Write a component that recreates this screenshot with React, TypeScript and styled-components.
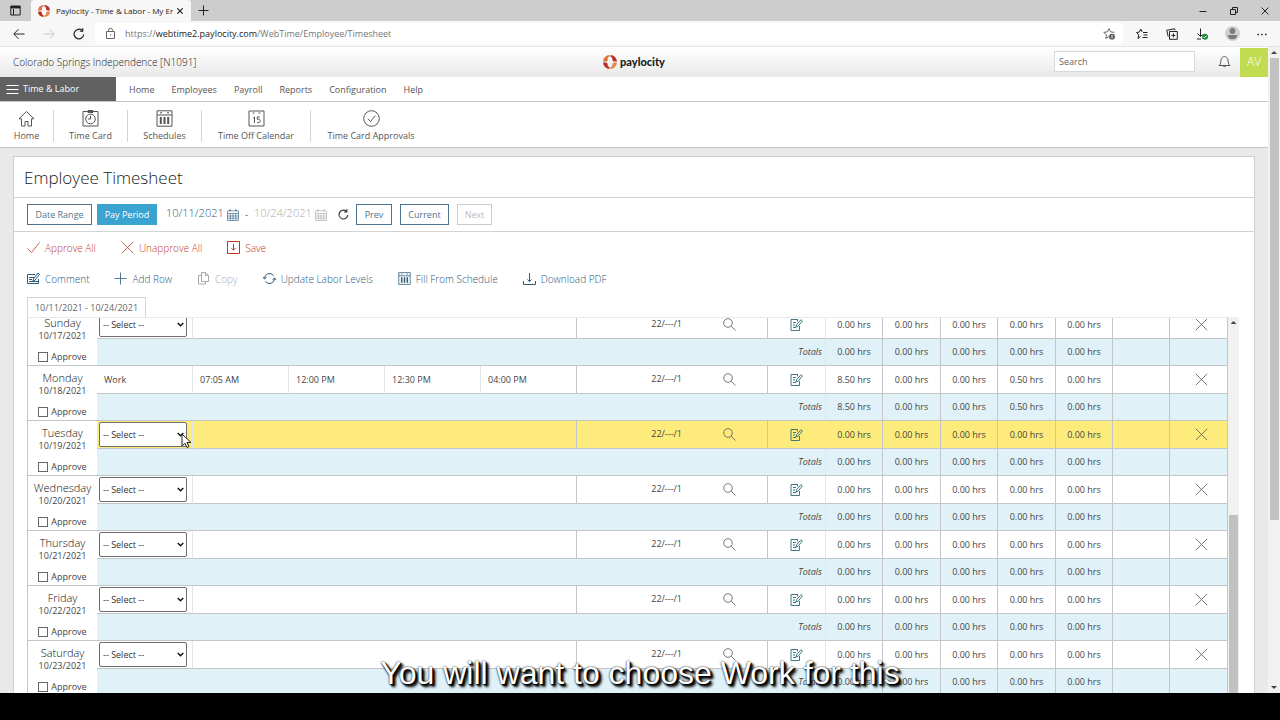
import React, { useLayoutEffect, useRef } from "react";
import styled, { createGlobalStyle, css } from "styled-components";

const GlobalStyle = createGlobalStyle`
  *, *::before, *::after { box-sizing: border-box; }
  body { margin: 0; background: #000; }
  button, input, select { font: inherit; color: inherit; margin: 0; }
  button { cursor: pointer; }
  h1, p { margin: 0; }
`;

const line = "#c3c6c8";
const faint = "#e3e6e8";
const steel = "#4f7590";
const deepSteel = "#2c5a7a";
const rust = "#c0391f";

const Screen = styled.div`
  position: relative;
  display: flex;
  flex-direction: column;
  height: 100vh;
  overflow: hidden;
  background: #fff;
  color: #444;
  font: 400 9px/12px "Open Sans", "Liberation Sans", sans-serif;
`;

const Icon = styled.svg<{ $size?: number; $thin?: boolean }>`
  display: block;
  flex: none;
  width: ${(p) => p.$size ?? 13}px;
  height: ${(p) => p.$size ?? 13}px;
  fill: none;
  stroke: currentColor;
  stroke-width: ${(p) => (p.$thin ? 0.8 : 1)};
`;

/* ---------- browser frame ---------- */

const TabStrip = styled.div`
  display: flex;
  align-items: stretch;
  flex: none;
  height: 21px;
  background: #cdcdcd;
  color: #222;
`;

const StripIcon = styled.button<{ $narrow?: boolean }>`
  display: flex;
  align-items: center;
  justify-content: center;
  width: ${(p) => (p.$narrow ? 24 : 31)}px;
  padding: 0;
  border: 0;
  background: none;
`;

const BrowserTab = styled.div`
  display: flex;
  align-items: center;
  width: 160px;
  padding: 0 4px 0 7px;
  border-radius: 3px 3px 0 0;
  background: #f7f7f7;
`;

const TabTitle = styled.span`
  flex: 1;
  margin-left: 6px;
  overflow: hidden;
  font-size: 8px;
  white-space: nowrap;
`;

const TabClose = styled.button`
  display: flex;
  justify-content: center;
  width: 14px;
  padding: 0;
  border: 0;
  background: none;
`;

const WindowButtons = styled.div`
  display: flex;
  margin-left: auto;
`;

const AddressRow = styled.div`
  display: flex;
  align-items: center;
  flex: none;
  height: 26px;
  padding: 2px 3px 2px 4px;
  border-bottom: 1px solid #e6e6e6;
  background: #f7f7f7;
  color: #222;
`;

const ToolButton = styled.button<{ $dim?: boolean }>`
  display: flex;
  align-items: center;
  justify-content: center;
  width: 30px;
  height: 22px;
  padding: 0;
  border: 0;
  background: none;
  color: ${(p) => (p.$dim ? "#c8c8c8" : "#222")};
`;

const AddressBox = styled.div`
  display: flex;
  align-items: center;
  flex: 1;
  height: 21px;
  margin: 0 4px 0 1px;
  padding: 0 8px 0 10px;
  border-radius: 3px;
  background: #fff;
  color: #666;
`;

const Url = styled.p`
  flex: 1;
  margin-left: 9px;
  color: #777;
  b { font-weight: 400; color: #222; }
`;

/* ---------- page header ---------- */

const Viewport = styled.div`
  display: flex;
  flex: 1;
  min-height: 0;
`;

const Page = styled.div`
  display: flex;
  flex-direction: column;
  flex: 1;
  min-width: 0;
  background: #e9e9e9;
`;

const TopBar = styled.header`
  display: grid;
  grid-template-columns: 1fr auto 1fr;
  align-items: center;
  flex: none;
  height: 30px;
  background: linear-gradient(#fff, #e9e9e9);
`;

const Company = styled.span`
  padding-left: 13px;
  font-weight: 300;
  font-size: 10px;
  color: #222;
`;

const Brand = styled.span`
  display: flex;
  align-items: center;
  gap: 3px;
  color: #222;
  font: 900 11px/14px Lato, sans-serif;
`;

const TopTools = styled.div`
  display: flex;
  align-items: center;
  justify-content: flex-end;
  height: 29px;
  padding-bottom: 1px;
`;

const SearchInput = styled.input`
  width: 141px;
  height: 21px;
  padding: 0 4px;
  border: 1px solid #d8d8d8;
  background: #fff;
  outline: 0;
  &::placeholder { color: #666; opacity: 1; }
`;

const BellButton = styled.button`
  display: flex;
  margin: 0 9px 0 23px;
  padding: 0;
  border: 0;
  background: none;
  color: #555;
`;

const UserBadge = styled.button`
  align-self: flex-start;
  width: 28px;
  height: 29px;
  padding: 0;
  border: 0;
  background: #c2dc52;
  color: #fff;
  font-weight: 300;
  font-size: 12px;
`;

const NavBar = styled.nav`
  display: flex;
  flex: none;
  height: 25px;
  border-bottom: 1px solid ${line};
  background: #fff;
`;

const ModuleButton = styled.button`
  display: flex;
  align-items: center;
  gap: 4px;
  width: 116px;
  margin-right: 13px;
  padding: 0 6px;
  border: 0;
  background: #616161;
  color: #fff;
`;

const NavLink = styled.a`
  margin-right: 17px;
  line-height: 25px;
  color: #555;
  text-decoration: none;
`;

const ShortcutBar = styled.nav`
  display: flex;
  align-items: center;
  flex: none;
  height: 46px;
  padding-top: 3px;
  border-bottom: 1px solid ${line};
  background: #fff;
`;

const Shortcut = styled.a<{ $width: number }>`
  display: flex;
  flex-direction: column;
  align-items: center;
  justify-content: space-between;
  width: ${(p) => p.$width}px;
  height: 32px;
  color: #555;
  text-decoration: none;
  white-space: nowrap;
  & + & { border-left: 1px solid #d4d4d4; }
`;

/* ---------- timesheet card ---------- */

const Card = styled.main`
  display: flex;
  flex-direction: column;
  flex: 1;
  min-height: 0;
  margin: 8px 13px 0;
  border: 1px solid #cfcfcf;
  border-bottom: 0;
  background: #fff;
`;

const CardTitle = styled.h1`
  flex: none;
  height: 41px;
  padding-left: 10px;
  border-bottom: 1px solid #d2d2d2;
  color: #222;
  font-weight: 300;
  font-size: 17px;
  line-height: 42px;
`;

const PeriodBar = styled.div`
  display: flex;
  align-items: center;
  flex: none;
  height: 34px;
  padding-left: 13px;
  border-bottom: 1px solid #d2d2d2;
`;

const PeriodButton = styled.button<{ $width: number; $filled?: boolean }>`
  width: ${(p) => p.$width}px;
  height: 21px;
  margin-right: 8px;
  padding: 0;
  border: 1px solid ${steel};
  background: #fff;
  color: ${steel};
  ${(p) => p.$filled && css`
    border-color: #3ba3d0;
    background: #3ba3d0;
    color: #fff;
  `}
  &:disabled { border-color: #ccc; color: #bbb; }
`;

const Segmented = styled.div`
  display: flex;
  margin-right: 1px;
  ${PeriodButton}:first-child { margin-right: 5px; }
`;

const DateField = styled.label<{ $dim?: boolean }>`
  display: flex;
  align-items: center;
  color: ${(p) => (p.$dim ? "#a8a8a8" : deepSteel)};
  input {
    width: 61px;
    padding: 0 0 3px;
    border: 0;
    background: none;
    font-weight: 300;
    font-size: 11px;
    line-height: 16px;
    outline: 0;
  }
`;

const Dash = styled.span`
  width: 15px;
  text-align: center;
`;

const RefreshButton = styled.button`
  display: flex;
  margin: 0 7px 0 11px;
  padding: 0;
  border: 0;
  background: none;
  color: #333;
`;

const ActionRow = styled.div`
  display: flex;
  align-items: center;
  flex: none;
  gap: 25px;
  height: 31px;
  padding-left: 13px;
`;

const Action = styled.button<{ $tone?: string }>`
  display: flex;
  align-items: center;
  gap: 5px;
  padding: 0;
  border: 0;
  background: none;
  color: ${(p) => p.$tone ?? deepSteel};
  font-weight: 300;
  font-size: 10px;
  line-height: 14px;
  &:disabled { color: #aaa; }
`;

const RangeTabs = styled.div`
  display: flex;
  flex: none;
  height: 20px;
  margin: 3px 0 0 13px;
`;

const RangeTab = styled.button`
  width: 119px;
  padding: 0;
  border: 1px solid #d4d4d4;
  border-bottom: 0;
  background: #fff;
  color: #666;
`;

const GridFrame = styled.div`
  display: flex;
  flex: 1;
  min-height: 0;
  margin: 0 15px 0 13px;
`;

const GridScroll = styled.div`
  flex: 1;
  min-width: 0;
  overflow: hidden;
  border-top: 1px solid #e9e9e9;
`;

const SheetTable = styled.table`
  width: 100%;
  table-layout: fixed;
  border-spacing: 0;
  border-left: 1px solid ${line};
`;

const Cell = styled.td<{ $soft?: boolean; $align?: string }>`
  height: 28px;
  padding: 0;
  border-right: 1px solid ${(p) => (p.$soft ? faint : line)};
  border-bottom: 1px solid ${line};
  text-align: ${(p) => p.$align ?? "center"};
  white-space: nowrap;
`;

const EntryRow = styled.tr<{ $active?: boolean }>`
  ${Cell} { background: ${(p) => (p.$active ? "#fdec7c" : "#fff")}; }
`;

const TotalsRow = styled.tr`
  ${Cell} { height: 27px; background: #e0f2f8; }
`;

const DayCell = styled.th`
  padding: 0;
  border-bottom: 1px solid ${line};
  background: #fff;
  font-weight: 400;
  text-align: center;
  vertical-align: top;
`;

const DayBlock = styled.div`
  display: flex;
  flex-direction: column;
  align-items: center;
  height: 54px;
  padding-top: 4px;
`;

const DayName = styled.span`
  font-weight: 300;
  font-size: 11px;
  line-height: 15px;
  color: #111;
`;

const ApproveLabel = styled.label`
  display: flex;
  align-items: center;
  gap: 3px;
  margin-top: 9px;
  input {
    appearance: none;
    width: 10px;
    height: 10px;
    border: 1px solid #666;
    background: #fff;
  }
`;

const TypeBox = styled.div`
  position: relative;
  display: flex;
  padding: 0 2px;
`;

const TypeSelect = styled.select`
  appearance: none;
  width: 88px;
  height: 25px;
  padding: 0 3px;
  border: 1px solid #6d6d6d;
  border-radius: 2px;
  background: #fff;
  color: #333;
`;

const Chevron = styled(Icon)`
  position: absolute;
  top: 9px;
  left: 80px;
  color: #111;
  stroke-width: 1.4;
  pointer-events: none;
`;

const Punch = styled.span`
  padding-left: 7px;
`;

const LaborBox = styled.div`
  display: flex;
  align-items: center;
  justify-content: flex-end;
  gap: 41px;
  padding: 0 31px 1px 0;
`;

const IconButton = styled.button<{ $tone?: string }>`
  display: inline-flex;
  padding: 0;
  border: 0;
  background: none;
  color: ${(p) => p.$tone ?? "#555"};
  vertical-align: middle;
`;

const RemoveWrap = styled.div`
  padding-left: 6px;
`;

const TotalsLabel = styled.em`
  padding-right: 3px;
`;

/* ---------- scroll bars ---------- */

const ScrollTrack = styled.div<{ $wide?: boolean }>`
  display: flex;
  flex-direction: column;
  align-items: center;
  flex: none;
  width: ${(p) => (p.$wide ? 12 : 11)}px;
  background: #f1f1f1;
`;

const ScrollArrow = styled.span<{ $down?: boolean }>`
  flex: none;
  width: 6px;
  height: 3px;
  margin: 4px 0;
  background: #444;
  clip-path: ${(p) => (p.$down ? "polygon(0 0, 100% 0, 50% 100%)" : "polygon(50% 0, 100% 100%, 0 100%)")};
`;

const ScrollThumb = styled.span<{ $size: number }>`
  flex: ${(p) => p.$size} 0 0;
  width: 9px;
  background: #c1c1c1;
`;

const ScrollSpace = styled.span<{ $size: number }>`
  flex: ${(p) => p.$size} 0 0;
`;

/* ---------- video layer ---------- */

const Pointer = styled(Icon)`
  position: absolute;
  top: 11px;
  left: 84px;
  fill: #fff;
  stroke: #222;
  pointer-events: none;
`;

const BottomBand = styled.footer`
  flex: none;
  height: 27px;
  background: #000;
`;

const Caption = styled.p`
  position: absolute;
  right: 0;
  bottom: 29px;
  left: 0;
  color: #fff;
  font: 400 32px/36px "Liberation Sans", Arial, sans-serif;
  text-align: center;
  text-shadow: 0 0 2px #000, 1px 1px 1px #000, 2px 2px 2px #000, 3px 3px 3px #000;
  pointer-events: none;
`;

/* ---------- drawings ---------- */

const CheckIcon = () => <Icon $thin viewBox="0 0 13 13"><path d="M.5 7.5l4 4L12.5 1.5" /></Icon>;
const CrossIcon = () => <Icon $thin viewBox="0 0 13 13"><path d="M.8.8l11.4 11.4M12.2.8L.8 12.2" /></Icon>;
const PlusIcon = () => <Icon $thin viewBox="0 0 13 13"><path d="M6.5.5v12M.5 6.5h12" /></Icon>;
const SaveIcon = () => <Icon viewBox="0 0 13 13"><path d="M.5.5h12v12H.5zM6.5 3v6M4.5 7.2l2 2 2-2" /></Icon>;
const CommentIcon = () => <Icon viewBox="0 0 13 13"><path d="M8 2.5H.5v9h11V7M2 5.5h5M2 7.5h3M2 9.500h9M6 9l.5-2.200L11 1l1.500 1.300L8 8.200z" /></Icon>;
const CopyIcon = () => <Icon viewBox="0 0 13 13"><path d="M4.500.5h4l3 3v6h-7zM8.500.5v3h3M4.500 3.500h-3v8.500h7V9.500" /></Icon>;
const CycleIcon = () => <Icon viewBox="0 0 13 13"><path d="M1.500 6.500a5 5 0 0 1 9-3M11.500 6.500a5 5 0 0 1-9 3M0 5l1.500 2L3.500 5.300M9.500 7.700l2-1.700L13 8" /></Icon>;
const ScheduleIcon = ({ size = 13 }: { size?: number }) => (
  <Icon $size={size} viewBox="0 0 17 17"><path d="M1 .8h15v15.400H1zM1 5h15M4 2.800h2M11 2.800h2" /><path d="M4.800 7v7M8.500 7v7M12.200 7v7" strokeWidth="2" /></Icon>
);
const DownloadIcon = () => <Icon viewBox="0 0 13 13"><path d="M.5 9v3.500h12V9M6.500 1v8.500M4.500 7.500l2 2 2-2" /></Icon>;
const GridIcon = () => (
  <Icon $size={12} viewBox="0 0 12 12">
    <g strokeWidth=".6"><path d="M.5 1.800h11v9.700H.5zM.5 4.500h11M.5 7h11M.5 9.200h11M3.300 4.500v7M6 4.500v7M8.800 4.500v7" /><path d="M3 .3v2M9 .3v2" strokeWidth="1" /></g>
  </Icon>
);
const ReloadIcon = ({ size = 11 }: { size?: number }) => <Icon $size={size} viewBox="0 0 11 11"><path d="M9.800 6A4.400 4.400 0 1 1 8.300 2.200M8.900.3v2.700H6.200" strokeWidth="1.100" /></Icon>;
const SearchIcon = () => <Icon $thin viewBox="0 0 13 13"><circle cx="5" cy="5" r="4.300" /><path d="M8.200 8.200l4.300 4.300" /></Icon>;
const NoteIcon = () => <Icon viewBox="0 0 13 13"><path d="M8 1.500H1v11h8.500V8M3 4.500h3M3 7h2M3 9.500h3M6 9l.6-2.300L11 1.700l1.400 1.200L8.100 8.200zM7.500 1.500v2" /></Icon>;
const HomeIcon = () => <Icon $size={17} viewBox="0 0 17 17"><path d="M1 8.800L8.500 1.500 16 8.800h-2.500V16h-3.500v-4.500H7V16H3.500V8.800z" /></Icon>;
const TimeCardIcon = () => <Icon $size={17} viewBox="0 0 17 17"><path d="M1 1.500h15V16H1zM6 .5h5v2H6zM8.500 5.800v3.200H6" /><circle cx="8.500" cy="9" r="4.800" /></Icon>;
const ApprovalIcon = () => <Icon $size={17} viewBox="0 0 17 17"><circle cx="8.500" cy="8.500" r="7.800" /><path d="M4.800 8.800l2.700 2.700 4.800-5.800" /></Icon>;
const CalendarIcon = () => (
  <Icon $size={17} viewBox="0 0 17 17">
    <path d="M1 1h15v15H1zM4.500 3h2M10.500 3h2M5.300 8l1.200-1v6M11.800 7H9.300v2.300c2.500-.5 3 .7 2.700 2-.3 1.400-1.700 1.700-3 1.200" />
  </Icon>
);
const BellIcon = () => <Icon viewBox="0 0 13 13"><path d="M1 10.500c2-1.500 1.500-3 2-5.500C3.500 2.700 5 1.500 6.500 1.500S9.500 2.700 10 5c.5 2.500 0 4 2 5.500zM5 10.500c.3 1.600 2.700 1.600 3 0" /></Icon>;
const MenuIcon = () => <Icon viewBox="0 0 13 13"><path d="M.5 2.500h12M.5 6.500h12M.5 10.500h12" /></Icon>;
const LogoIcon = ({ size }: { size: number }) => (
  <Icon $size={size} viewBox="0 0 15 15">
    <g stroke="none">
      <path fill="#e0703e" d="M7 0A7.500 7.500 0 0 0 0 7h3.500C4 6.500 5 6.500 5 5.500V4c0-1.500 1-2 2-2z" />
      <path fill="#b8322a" d="M8 0a7.500 7.500 0 0 1 7 7h-3.500L10 5.500V4C10 3 9 2.500 8 2z" />
      <path fill="#b8322a" d="M0 8a7.500 7.500 0 0 0 7 7v-2c-1-.5-2-1-2-2V9.500L3.500 8z" />
      <path fill="#e8884a" d="M15 8a7.500 7.500 0 0 1-7 7v-2c1-.5 2-1 2-2V9.500L11.500 8z" />
    </g>
  </Icon>
);

/* ---------- data ---------- */

type Day = { name: string; date: string; type?: string; punches?: string[]; hours: string[]; active?: boolean };

const none = ["0.00 hrs", "0.00 hrs", "0.00 hrs", "0.00 hrs", "0.00 hrs"];

const days: Day[] = [
  { name: "Sunday", date: "10/17/2021", hours: none },
  {
    name: "Monday", date: "10/18/2021", type: "Work",
    punches: ["07:05 AM", "12:00 PM", "12:30 PM", "04:00 PM"],
    hours: ["8.50 hrs", "0.00 hrs", "0.00 hrs", "0.50 hrs", "0.00 hrs"],
  },
  { name: "Tuesday", date: "10/19/2021", hours: none, active: true },
  { name: "Wednesday", date: "10/20/2021", hours: none },
  { name: "Thursday", date: "10/21/2021", hours: none },
  { name: "Friday", date: "10/22/2021", hours: none },
  { name: "Saturday", date: "10/23/2021", hours: none },
];

const columnWidths = [69, 96, 96, 96, 96, 96, 0, 58, 57, 58, 57, 58, 57, 57, 58];
const menu = ["Home", "Employees", "Payroll", "Reports", "Configuration", "Help"];

function DayRows({ day }: { day: Day }) {
  return (
    <>
      <EntryRow $active={day.active}>
        <DayCell rowSpan={2} scope="rowgroup">
          <DayBlock>
            <DayName>{day.name}</DayName>
            <span>{day.date}</span>
            <ApproveLabel><input type="checkbox" />Approve</ApproveLabel>
          </DayBlock>
        </DayCell>
        <Cell $soft $align="left">
          {day.type ? <Punch>{day.type}</Punch> : (
            <TypeBox>
              <TypeSelect aria-label={`Pay type for ${day.name}`}><option>-- Select --</option></TypeSelect>
              <Chevron $size={7} viewBox="0 0 7 7"><path d="M.7 2l2.800 2.800L6.300 2" /></Chevron>
              {day.active && (
                <Pointer $size={16} viewBox="0 0 16 16"><path d="M1 1v12l3-2.700 2 4.200 2-1-2-4h4z" /></Pointer>
              )}
            </TypeBox>
          )}
        </Cell>
        {day.punches
          ? day.punches.map((p, i) => <Cell key={p} $soft={i < 3} $align="left"><Punch>{p}</Punch></Cell>)
          : <Cell colSpan={4} />}
        <Cell>
          <LaborBox>
            <span>22/---/1</span>
            <IconButton aria-label="Find labor level"><SearchIcon /></IconButton>
          </LaborBox>
        </Cell>
        <Cell $soft><IconButton $tone="#3f7784" aria-label="Edit note"><NoteIcon /></IconButton></Cell>
        {day.hours.map((h, i) => <Cell key={i}>{h}</Cell>)}
        <Cell />
        <Cell><RemoveWrap><IconButton aria-label="Remove row"><CrossIcon /></IconButton></RemoveWrap></Cell>
      </EntryRow>
      <TotalsRow>
        <Cell colSpan={7} $soft $align="right"><TotalsLabel>Totals</TotalsLabel></Cell>
        {day.hours.map((h, i) => <Cell key={i}>{h}</Cell>)}
        <Cell />
        <Cell />
      </TotalsRow>
    </>
  );
}

export default function App() {
  const grid = useRef<HTMLDivElement>(null);

  // The first day sits slightly scrolled under the top edge of the grid.
  useLayoutEffect(() => {
    if (grid.current) grid.current.scrollTop = 7;
  }, []);

  return (
    <Screen>
      <GlobalStyle />
      <TabStrip>
        <StripIcon aria-label="Tab actions">
          <Icon $size={11} viewBox="0 0 11 11"><path d="M.8 1h9.400v9H.8zM3.500 4v6" /><path d="M.8 2.200h9.400" strokeWidth="2.400" /></Icon>
        </StripIcon>
        <BrowserTab>
          <LogoIcon size={12} />
          <TabTitle>Paylocity - Time &amp; Labor - My Er</TabTitle>
          <TabClose aria-label="Close tab"><Icon $size={6} viewBox="0 0 6 6"><path d="M.3.3l5.400 5.400M5.700.3L.3 5.700" strokeWidth="1.200" /></Icon></TabClose>
        </BrowserTab>
        <StripIcon $narrow aria-label="New tab"><Icon $size={11} viewBox="0 0 11 11"><path d="M5.500.5v10M.5 5.500h10" /></Icon></StripIcon>
        <WindowButtons>
          <StripIcon aria-label="Minimize"><Icon $size={8} viewBox="0 0 8 8"><path d="M.5 4.500h7" /></Icon></StripIcon>
          <StripIcon aria-label="Restore"><Icon $size={8} viewBox="0 0 8 8"><path d="M.5 2.500h5v5h-5zM2.500 2V.5h5v5H6" /></Icon></StripIcon>
          <StripIcon aria-label="Close"><Icon $size={8} viewBox="0 0 8 8"><path d="M.5.5l7 7M7.500.5l-7 7" /></Icon></StripIcon>
        </WindowButtons>
      </TabStrip>
      <AddressRow>
        <ToolButton aria-label="Back"><Icon $size={12} viewBox="0 0 12 12"><path d="M11.500 6H1M5.500 1.200L.8 6l4.700 4.800" /></Icon></ToolButton>
        <ToolButton $dim aria-label="Forward"><Icon $size={12} viewBox="0 0 12 12"><path d="M.5 6H11M6.500 1.200L11.200 6l-4.700 4.800" /></Icon></ToolButton>
        <ToolButton aria-label="Reload"><ReloadIcon size={12} /></ToolButton>
        <AddressBox>
          <Icon $size={11} viewBox="0 0 11 11"><path d="M1.500 3.500h8v7h-8zM3.500 3.500V2.300a2 2 0 0 1 4 0v1.200M5.500 6.300v1.500" /></Icon>
          <Url>https://<b>webtime2.paylocity.com</b>/WebTime/Employee/Timesheet</Url>
          <Icon $size={12} viewBox="0 0 12 12">
            <path d="M6 8.500L2.700 10.500l.8-3.700L.7 4.300l3.700-.4L6 .7l1.500 3.200 3.800.4" />
            <circle cx="9" cy="8.700" r="2.900" fill="#555" stroke="none" /><path d="M9 7v3.400" stroke="#fff" />
          </Icon>
        </AddressBox>
        <ToolButton aria-label="Favorites"><Icon $size={12} viewBox="0 0 12 12"><path d="M4.500 8.500L2 10.500l.7-3.700L.6 4.500l2.700-.4L4.800 1l1.400 3M7 4.500h4.500M7.500 7h4M6.500 9.500h5" /></Icon></ToolButton>
        <ToolButton aria-label="Collections"><Icon $size={12} viewBox="0 0 12 12"><path d="M3.500 3.500h7.800v7.800H3.500zM7.400 5.400v4M5.400 7.400h4M2.200 8.500L.7 2.300 8.500.8l.5 1.500" /></Icon></ToolButton>
        <ToolButton aria-label="Downloads">
          <Icon $size={12} viewBox="0 0 12 12"><path d="M4.500.5v8M1.500 5.500l3 3 2-2M1 11h4" /><circle cx="9" cy="8.800" r="3" fill="#1f8a3d" stroke="none" /><path d="M7.600 8.800l1 1 1.800-2" stroke="#fff" /></Icon>
        </ToolButton>
        <ToolButton aria-label="Profile">
          <Icon $size={15} viewBox="0 0 15 15"><g stroke="none"><circle cx="7.500" cy="7.500" r="7.500" fill="#cfcfcf" /><circle cx="7.500" cy="5" r="2.900" fill="#7b7b7b" /><path d="M2.800 9h9.400c0 2.800-2 4.300-4.700 4.300S2.800 11.800 2.800 9z" fill="#7b7b7b" /></g></Icon>
        </ToolButton>
        <ToolButton aria-label="More"><Icon $size={10} viewBox="0 0 10 10"><path d="M.5 5.500h1.500M4.200 5.500h1.500M8 5.500h1.500" strokeWidth="1.400" /></Icon></ToolButton>
      </AddressRow>

      <Viewport>
        <Page>
          <TopBar>
            <Company>Colorado Springs Independence [N1091]</Company>
            <Brand><LogoIcon size={14} />paylocity</Brand>
            <TopTools>
              <SearchInput type="text" aria-label="Search" placeholder="Search" />
              <BellButton aria-label="Notifications"><BellIcon /></BellButton>
              <UserBadge>AV</UserBadge>
            </TopTools>
          </TopBar>
          <NavBar>
            <ModuleButton><MenuIcon />Time &amp; Labor</ModuleButton>
            {menu.map((m) => <NavLink key={m} href="#">{m}</NavLink>)}
          </NavBar>
          <ShortcutBar>
            <Shortcut href="#" $width={53}><HomeIcon />Home</Shortcut>
            <Shortcut href="#" $width={74}><TimeCardIcon />Time Card</Shortcut>
            <Shortcut href="#" $width={74}><ScheduleIcon size={17} />Schedules</Shortcut>
            <Shortcut href="#" $width={109}><CalendarIcon />Time Off Calendar</Shortcut>
            <Shortcut href="#" $width={121}><ApprovalIcon />Time Card Approvals</Shortcut>
          </ShortcutBar>

          <Card>
            <CardTitle>Employee Timesheet</CardTitle>
            <PeriodBar>
              <Segmented>
                <PeriodButton $width={65}>Date Range</PeriodButton>
                <PeriodButton $width={60} $filled>Pay Period</PeriodButton>
              </Segmented>
              <DateField><input type="text" aria-label="Start date" defaultValue="10/11/2021" /><GridIcon /></DateField>
              <Dash>-</Dash>
              <DateField $dim><input type="text" aria-label="End date" defaultValue="10/24/2021" /><GridIcon /></DateField>
              <RefreshButton aria-label="Refresh"><ReloadIcon /></RefreshButton>
              <PeriodButton $width={36}>Prev</PeriodButton>
              <PeriodButton $width={49}>Current</PeriodButton>
              <PeriodButton $width={35} disabled>Next</PeriodButton>
            </PeriodBar>
            <ActionRow>
              <Action $tone={rust}><CheckIcon />Approve All</Action>
              <Action $tone={rust}><CrossIcon />Unapprove All</Action>
              <Action $tone={rust}><SaveIcon />Save</Action>
            </ActionRow>
            <ActionRow>
              <Action><CommentIcon />Comment</Action>
              <Action><PlusIcon />Add Row</Action>
              <Action disabled><CopyIcon />Copy</Action>
              <Action><CycleIcon />Update Labor Levels</Action>
              <Action><ScheduleIcon />Fill From Schedule</Action>
              <Action><DownloadIcon />Download PDF</Action>
            </ActionRow>
            <RangeTabs><RangeTab>10/11/2021 - 10/24/2021</RangeTab></RangeTabs>
            <GridFrame>
              <GridScroll ref={grid}>
                <SheetTable>
                  <colgroup>
                    {columnWidths.map((w, i) => <col key={i} width={w || undefined} />)}
                  </colgroup>
                  <tbody>
                    {days.map((d) => <DayRows key={d.date} day={d} />)}
                  </tbody>
                </SheetTable>
              </GridScroll>
              <ScrollTrack>
                <ScrollArrow />
                <ScrollSpace $size={187} />
                <ScrollThumb $size={178} />
              </ScrollTrack>
            </GridFrame>
          </Card>
        </Page>
        <ScrollTrack $wide>
          <ScrollArrow />
          <ScrollThumb $size={462} />
          <ScrollSpace $size={162} />
          <ScrollArrow $down />
        </ScrollTrack>
      </Viewport>
      <BottomBand />
      <Caption>You will want to choose Work for this</Caption>
    </Screen>
  );
}
